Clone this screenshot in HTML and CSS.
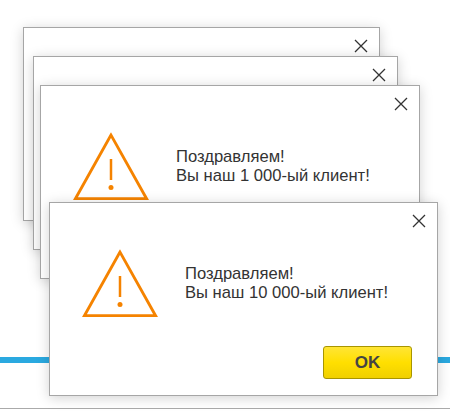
FILE: index.html
```html
<!DOCTYPE html>
<html lang="ru">
<head>
    <meta charset="UTF-8">
    <meta name="viewport" content="width=device-width, initial-scale=1.0">
    <title>Поздравляем</title>
    <link rel="stylesheet" href="styles.css">
</head>
<body>

    <div class="desktop">
        <div class="blue-line"></div>
        <div class="gray-line"></div>

        <div class="window window-1">
            <div class="window-top">
                <svg class="close" viewBox="0 0 14 14"><path d="M1 1 L13 13 M13 1 L1 13"/></svg>
            </div>
        </div>

        <div class="window window-2">
            <div class="window-top">
                <svg class="close" viewBox="0 0 14 14"><path d="M1 1 L13 13 M13 1 L1 13"/></svg>
            </div>
        </div>

        <div class="window window-3">
            <div class="window-top">
                <svg class="close" viewBox="0 0 14 14"><path d="M1 1 L13 13 M13 1 L1 13"/></svg>
            </div>
            <div class="window-body">
                <svg class="warning" viewBox="0 0 76 70">
                    <path class="warning-outline" d="M38 3 L2.4 66.7 H73.6 Z"/>
                    <path class="warning-mark" d="M38 27 V48"/>
                    <circle class="warning-dot" cx="38" cy="55.5" r="2.5"/>
                </svg>
                <p class="message">Поздравляем!<br>Вы наш 1 000-ый клиент!</p>
            </div>
        </div>

        <div class="window window-4">
            <div class="window-top">
                <svg class="close" viewBox="0 0 14 14"><path d="M1 1 L13 13 M13 1 L1 13"/></svg>
            </div>
            <div class="window-body">
                <svg class="warning" viewBox="0 0 76 70">
                    <path class="warning-outline" d="M38 3 L2.4 66.7 H73.6 Z"/>
                    <path class="warning-mark" d="M38 27 V48"/>
                    <circle class="warning-dot" cx="38" cy="55.5" r="2.5"/>
                </svg>
                <p class="message">Поздравляем!<br>Вы наш 10 000-ый клиент!</p>
            </div>
            <div class="window-bottom">
                <button class="ok-button">OK</button>
            </div>
        </div>
    </div>

</body>
</html>
```

FILE: styles.css
```css
body {
    margin: 0;
    background-color: #fff;
    font-family: "Liberation Sans", Arial, sans-serif;
    color: #333;
}

.desktop {
    position: relative;
    height: 413px;
    overflow: hidden;
    padding-top: 357px;
    box-sizing: border-box;
}

.blue-line {
    height: 6px;
    background-color: #2aa9e0;
}

.gray-line {
    height: 1px;
    margin-top: 45px;
    background-color: #aaa;
}

.window {
    position: absolute;
    box-sizing: border-box;
    display: flex;
    flex-direction: column;
    background-color: #fff;
    border: 1px solid #a6a6a6;
    box-shadow: 0 2px 12px rgba(0, 0, 0, 0.18);
}

.window-1 {
    left: 23px;
    top: 27px;
    width: 357px;
    height: 194px;
}

.window-2 {
    left: 33px;
    top: 56px;
    width: 365px;
    height: 194px;
}

.window-3 {
    left: 40px;
    top: 85px;
    width: 380px;
    height: 194px;
}

.window-4 {
    left: 49px;
    top: 202px;
    width: 389px;
    height: 194px;
}

.window-top {
    display: flex;
    justify-content: flex-end;
    padding: 11px 11px 0 0;
}

.close {
    width: 14px;
    height: 14px;
    display: block;
}

.close path {
    fill: none;
    stroke: #333;
    stroke-width: 1.3;
}

.window-body {
    display: flex;
    align-items: center;
    margin-top: 21px;
    padding-left: 32px;
}

.warning {
    width: 76px;
    height: 70px;
    flex-shrink: 0;
}

.warning-outline {
    fill: none;
    stroke: #f58300;
    stroke-width: 2.8;
}

.warning-mark {
    fill: none;
    stroke: #f58300;
    stroke-width: 2.5;
}

.warning-dot {
    fill: #f58300;
}

.message {
    margin: 0 0 0 27px;
    padding-bottom: 2px;
    font-size: 16.6px;
    line-height: 19px;
}

.window-bottom {
    display: flex;
    justify-content: flex-end;
    margin-top: auto;
    padding: 0 25px 16px 0;
}

.ok-button {
    width: 89px;
    height: 33px;
    padding: 0;
    border: 1px solid #a89500;
    border-radius: 3px;
    background: linear-gradient(to bottom, #ffe535 0%, #ffdf00 50%, #f0d000 100%);
    font-family: "Liberation Sans", Arial, sans-serif;
    font-size: 17px;
    font-weight: bold;
    color: #444;
    cursor: pointer;
}
```
